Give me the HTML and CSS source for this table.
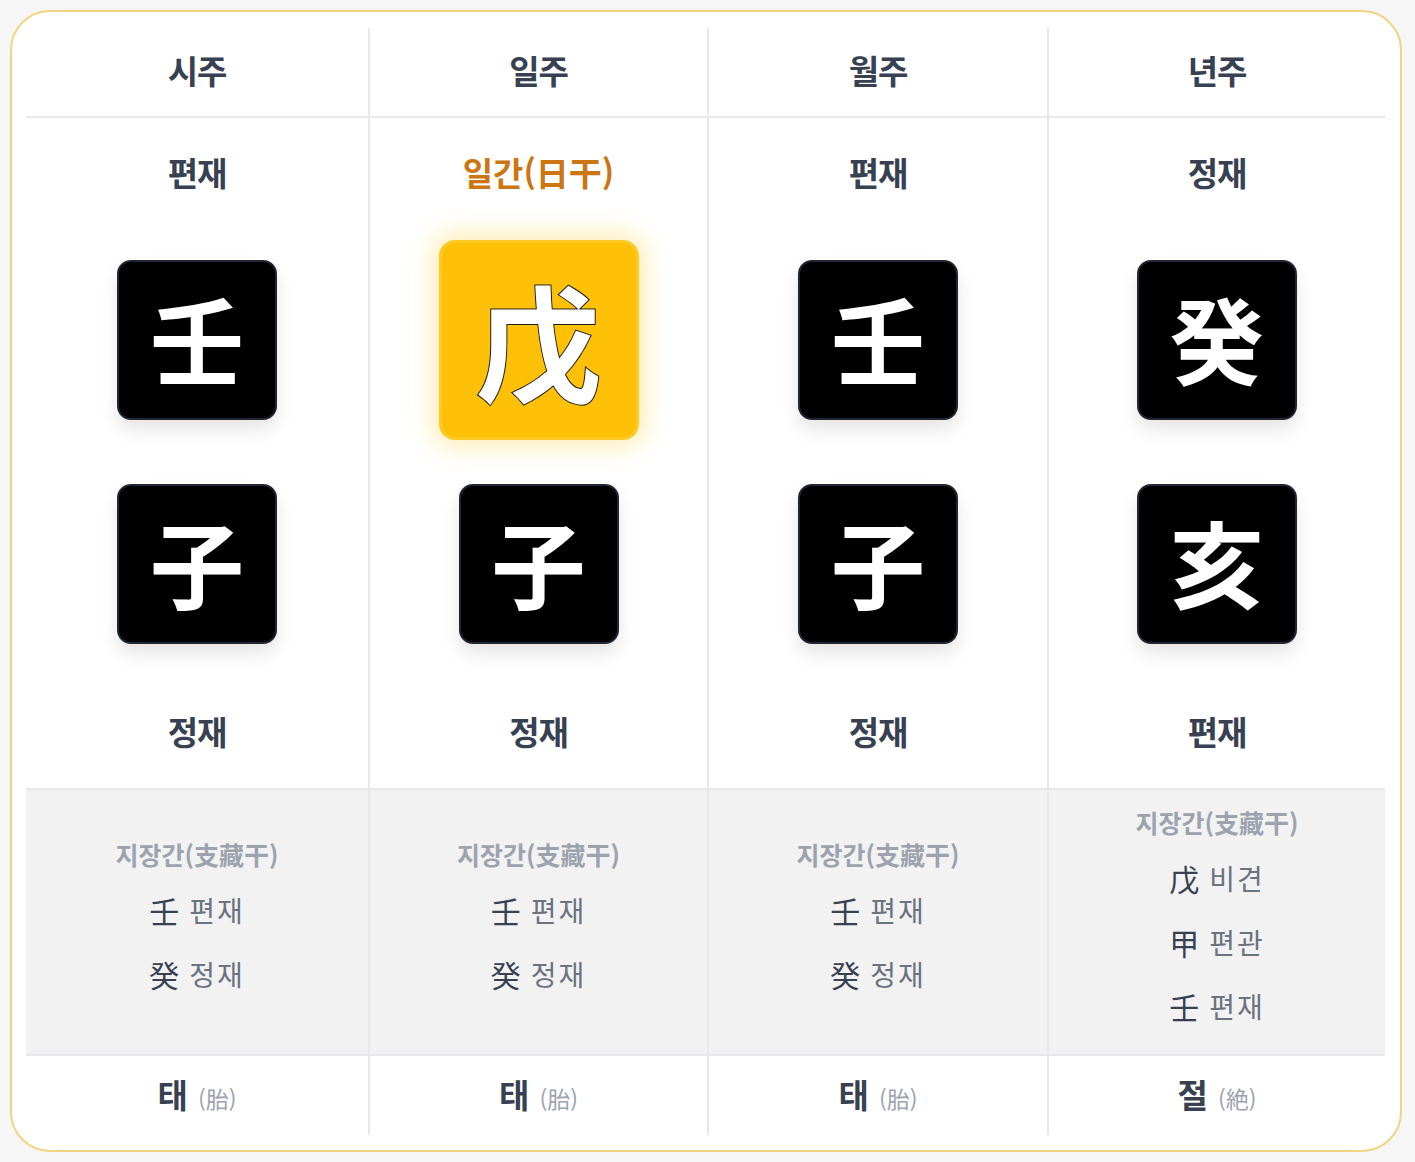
FILE: index.html
```html
<!DOCTYPE html>
<html lang="ko">
<head>
<meta charset="utf-8">
<title>사주 명식</title>
<link rel="stylesheet" href="styles.css">
</head>
<body>
<div class="card">
  <div class="table">
    <div class="col">
      <div class="cell head">시주</div>
      <div class="cell label">편재</div>
      <div class="cell tile-row"><div class="tile">壬</div></div>
      <div class="cell tile-row"><div class="tile">子</div></div>
      <div class="cell blabel">정재</div>
      <div class="cell jjg">
        <div class="jjg-box">
          <div class="jjg-title">지장간(支藏干)</div>
          <div class="jjg-item"><span class="hj">壬</span><span class="ko">편재</span></div>
          <div class="jjg-item"><span class="hj">癸</span><span class="ko">정재</span></div>
        </div>
      </div>
      <div class="cell foot"><span class="fk">태</span><span class="fh">(胎)</span></div>
    </div>
    <div class="col">
      <div class="cell head">일주</div>
      <div class="cell label day">일간(日干)</div>
      <div class="cell tile-row"><div class="tile gold">戊</div></div>
      <div class="cell tile-row"><div class="tile">子</div></div>
      <div class="cell blabel">정재</div>
      <div class="cell jjg">
        <div class="jjg-box">
          <div class="jjg-title">지장간(支藏干)</div>
          <div class="jjg-item"><span class="hj">壬</span><span class="ko">편재</span></div>
          <div class="jjg-item"><span class="hj">癸</span><span class="ko">정재</span></div>
        </div>
      </div>
      <div class="cell foot"><span class="fk">태</span><span class="fh">(胎)</span></div>
    </div>
    <div class="col">
      <div class="cell head">월주</div>
      <div class="cell label">편재</div>
      <div class="cell tile-row"><div class="tile">壬</div></div>
      <div class="cell tile-row"><div class="tile">子</div></div>
      <div class="cell blabel">정재</div>
      <div class="cell jjg">
        <div class="jjg-box">
          <div class="jjg-title">지장간(支藏干)</div>
          <div class="jjg-item"><span class="hj">壬</span><span class="ko">편재</span></div>
          <div class="jjg-item"><span class="hj">癸</span><span class="ko">정재</span></div>
        </div>
      </div>
      <div class="cell foot"><span class="fk">태</span><span class="fh">(胎)</span></div>
    </div>
    <div class="col">
      <div class="cell head">년주</div>
      <div class="cell label">정재</div>
      <div class="cell tile-row"><div class="tile">癸</div></div>
      <div class="cell tile-row"><div class="tile">亥</div></div>
      <div class="cell blabel">편재</div>
      <div class="cell jjg">
        <div class="jjg-box">
          <div class="jjg-title">지장간(支藏干)</div>
          <div class="jjg-item"><span class="hj">戊</span><span class="ko">비견</span></div>
          <div class="jjg-item"><span class="hj">甲</span><span class="ko">편관</span></div>
          <div class="jjg-item"><span class="hj">壬</span><span class="ko">편재</span></div>
        </div>
      </div>
      <div class="cell foot"><span class="fk">절</span><span class="fh">(絶)</span></div>
    </div>
  </div>
</div>
</body>
</html>
```

FILE: styles.css
```css
* { box-sizing: border-box; }

html, body {
  margin: 0;
  padding: 0;
}

body {
  background: #f6f6f6;
  font-family: "Noto Sans CJK KR", "Noto Sans", sans-serif;
  color: #374151;
  padding: 10px;
}

.card {
  width: 1392px;
  height: 1142px;
  background: #ffffff;
  border: 2px solid #f1d382;
  border-radius: 40px;
  padding: 16px 15px 15px 14px;
}

.table {
  display: grid;
  grid-template-columns: 342px 339px 340px 338px;
}

.col {
  display: flex;
  flex-direction: column;
}

.col + .col {
  border-left: 2px solid #e7e8eb;
}

.cell {
  display: flex;
  align-items: center;
  justify-content: center;
}

.head {
  height: 90px;
  border-bottom: 2px solid #e7e8eb;
  font-size: 33px;
  font-weight: 700;
  color: #374151;
  padding-bottom: 4px;
  letter-spacing: -1px;
}

.label {
  height: 110px;
  font-size: 33px;
  font-weight: 700;
  color: #374151;
  padding-bottom: 2px;
  letter-spacing: -1px;
}

.label.day {
  color: #cc7613;
  letter-spacing: 0;
}

.tile-row {
  height: 224px;
}

.tile {
  width: 160px;
  height: 160px;
  background: #000000;
  border: 2px solid #1f2733;
  border-radius: 14px;
  color: #ffffff;
  font-size: 94px;
  font-weight: 700;
  line-height: 1;
  display: flex;
  align-items: center;
  justify-content: center;
  box-shadow: 0 10px 18px rgba(0, 0, 0, 0.10);
  padding-bottom: 6px;
}

.tile.gold {
  width: 200px;
  height: 200px;
  background: #fec107;
  border: 3px solid #fcca25;
  border-radius: 16px;
  font-size: 126px;
  font-weight: 700;
  -webkit-text-stroke: 2px #1a1a1a;
  paint-order: stroke fill;
  box-shadow: 0 0 26px 6px rgba(254, 200, 30, 0.35);
  padding-bottom: 4px;
}

.blabel {
  height: 112px;
  font-size: 33px;
  font-weight: 700;
  color: #374151;
  padding-bottom: 2px;
  letter-spacing: -1px;
}

.jjg {
  height: 268px;
  background: #f2f2f3;
  border-top: 2px solid #e7e8eb;
  border-bottom: 2px solid #e7e8eb;
}

.jjg-box {
  display: flex;
  flex-direction: column;
  align-items: center;
  padding-bottom: 8px;
}

.jjg-title {
  height: 48px;
  line-height: 48px;
  font-size: 25px;
  font-weight: 700;
  color: #9ca3af;
  letter-spacing: 0;
}

.jjg-item {
  height: 64px;
  line-height: 64px;
  font-size: 28px;
  display: flex;
  align-items: center;
  gap: 10px;
}

.jjg-item .hj {
  color: #374151;
  font-size: 30px;
  font-weight: 400;
}

.jjg-item .ko {
  color: #6b7280;
  letter-spacing: 2px;
}

.foot {
  height: 79px;
  align-items: baseline;
  padding-top: 14px;
  gap: 10px;
}

.fk {
  font-size: 33px;
  font-weight: 700;
  color: #374151;
}

.fh {
  font-size: 23px;
  color: #9ca3af;
}
```
